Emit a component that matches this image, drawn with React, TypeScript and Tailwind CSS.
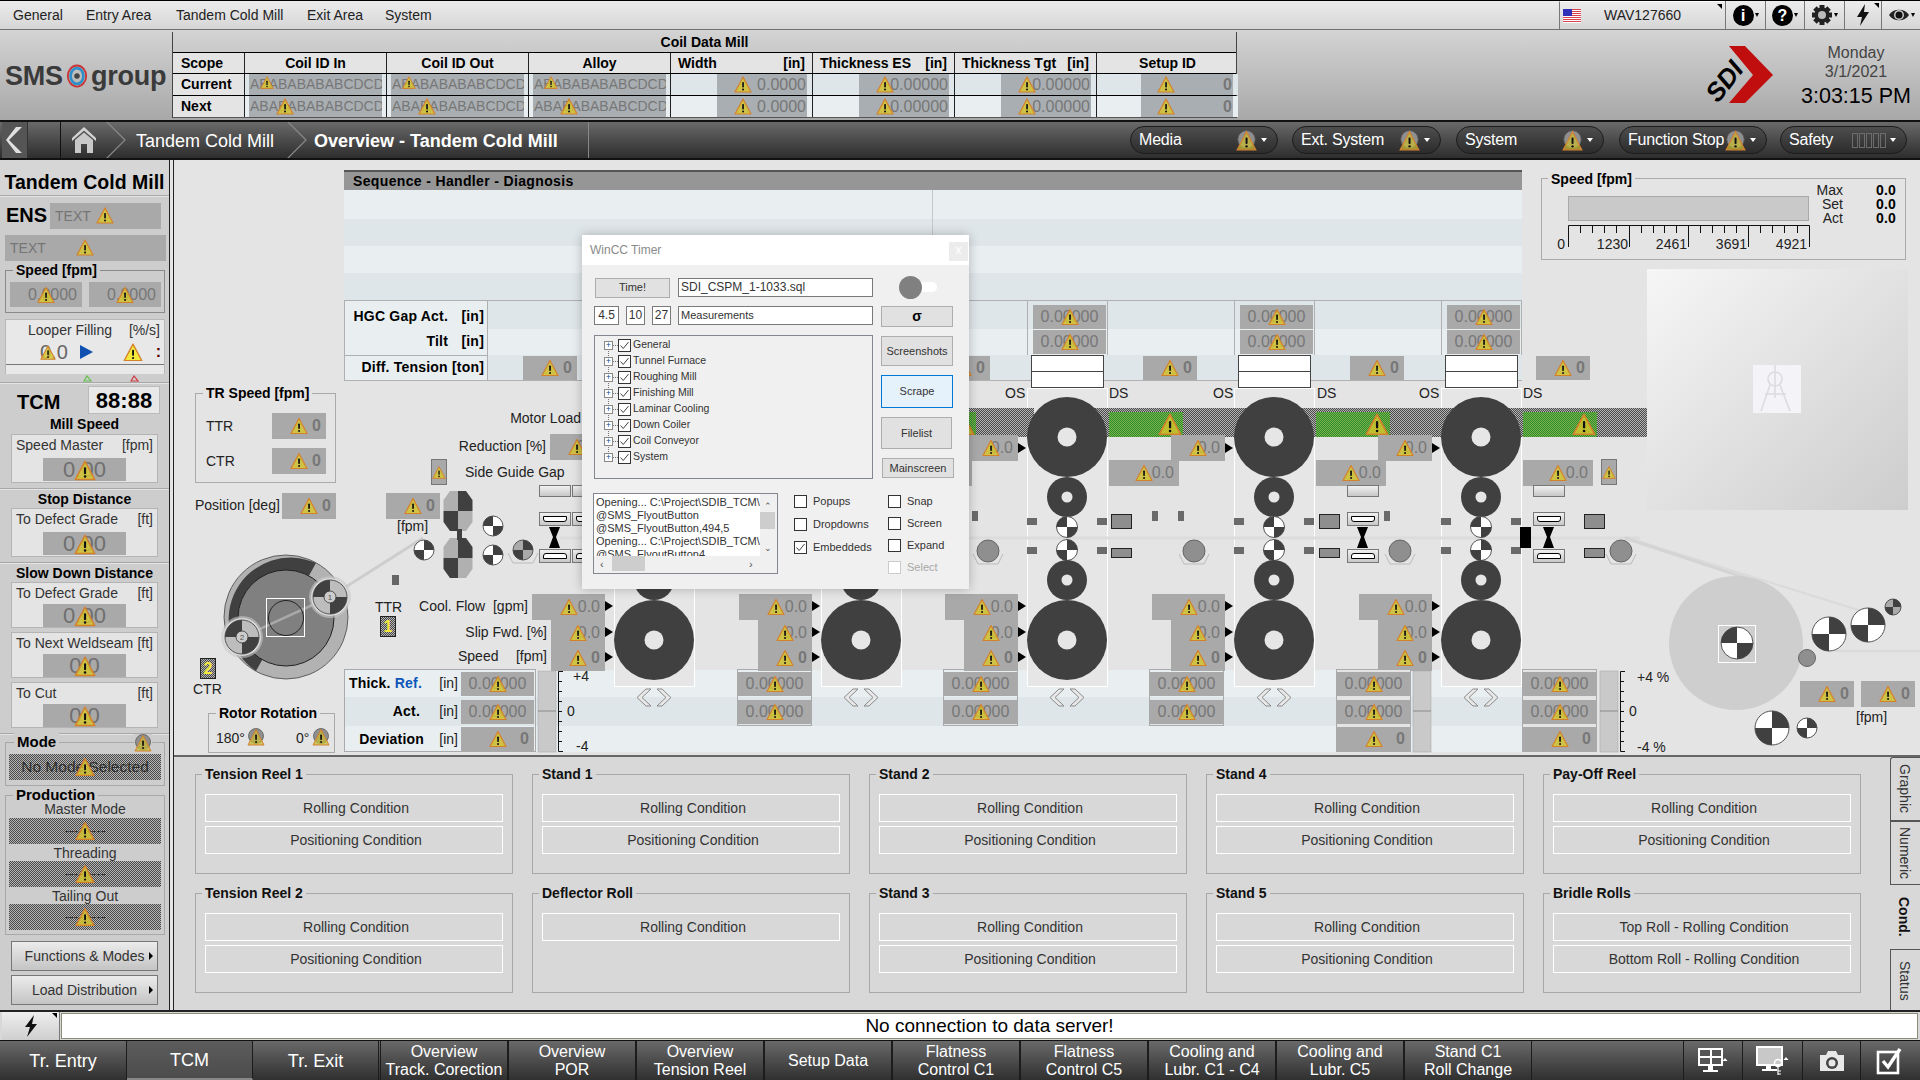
import React from "react";

const OX = 174;
const OY = 160;
const P = (x: number, y: number, w?: number, h?: number): React.CSSProperties => ({ left: x - OX, top: y - OY, width: w, height: h });
const CENTER = "absolute left-1/2 top-1/2 -translate-x-1/2 -translate-y-1/2";
const STANDS = [654, 861, 1067, 1274, 1481];
const CHECKER = "bg-[image:repeating-conic-gradient(#4a4a4a_0%_25%,#b4b4b4_0%_50%)] bg-[length:2px_2px]";

function Warn({ w = 18, className = "", bright = false }: { w?: number; className?: string; bright?: boolean }) {
  const h = (w * 17) / 18;
  return (
    <svg width={w} height={h} viewBox="0 0 36 34" className={className}>
      <path d="M18 2 L34 32 H2 Z" fill={bright ? "#f4e83c" : "#d6c62c"} fillOpacity={bright ? 1 : 0.82} stroke="#d4812c" strokeWidth="2.4" strokeLinejoin="round" />
      <rect x="16.4" y="12" width="3.4" height="11" rx="1.4" fill="#111" />
      <circle cx="18.1" cy="27" r="2" fill="#111" />
    </svg>
  );
}

function WarnRound({ className = "", s = 18 }: { className?: string; s?: number }) {
  return (
    <svg width={s} height={s} viewBox="0 0 36 36" className={className}>
      <circle cx="18" cy="16" r="15" fill="#8f8f8f" stroke="#555" strokeWidth="1.5" />
      <path d="M18 3 L34 34 H2 Z" fill="#c6b834" stroke="#d4812c" strokeWidth="2" fillOpacity="0.75" />
      <rect x="16.4" y="13" width="3.4" height="11" rx="1.4" fill="#111" />
      <circle cx="18.1" cy="28" r="2" fill="#111" />
    </svg>
  );
}

function Val({ x, y, w = 54, h = 26, t, bold = false, center = false }: { x: number; y: number; w?: number; h?: number; t: string; bold?: boolean; center?: boolean }) {
  return (
    <div
      className={`absolute flex items-center bg-[#a9a9a9] text-[#777] text-[16px] ${center ? "justify-center" : "justify-end pr-[5px]"} ${bold ? "font-bold" : ""}`}
      style={P(x, y, w, h)}
    >
      {t}
      <Warn className={CENTER} />
    </div>
  );
}

function Lab({ x, y, t, right = false, bold = false, className = "" }: { x: number; y: number; t: React.ReactNode; right?: boolean; bold?: boolean; className?: string }) {
  return (
    <div
      className={`absolute whitespace-nowrap leading-[18px] text-[14px] text-[#222] ${right ? "-translate-x-full" : ""} ${bold ? "font-bold text-black tracking-[0.2px]" : ""} ${className}`}
      style={{ left: x - OX, top: y - OY - 9 }}
    >
      {t}
    </div>
  );
}

function Chk({ cx, cy, r, a = "#404040", b = "#ffffff", flip = false, ring = "#555" }: { cx: number; cy: number; r: number; a?: string; b?: string; flip?: boolean; ring?: string }) {
  const w1 = flip
    ? `M${cx} ${cy} L${cx + r} ${cy} A${r} ${r} 0 0 1 ${cx} ${cy + r} Z M${cx} ${cy} L${cx - r} ${cy} A${r} ${r} 0 0 1 ${cx} ${cy - r} Z`
    : `M${cx} ${cy} L${cx} ${cy - r} A${r} ${r} 0 0 1 ${cx + r} ${cy} Z M${cx} ${cy} L${cx} ${cy + r} A${r} ${r} 0 0 1 ${cx - r} ${cy} Z`;
  return (
    <g>
      <circle cx={cx} cy={cy} r={r} fill={b} stroke={ring} strokeWidth="1" />
      <path d={w1} fill={a} />
    </g>
  );
}

function Oval({ cx, cy, id, notchTop }: { cx: number; cy: number; id: string; notchTop: boolean }) {
  return (
    <g>
      <clipPath id={id}>
        <path d={`M${cx - 8} ${cy - 20} H${cx + 8} L${cx + 14.5} ${cy - 11} V${cy + 11} L${cx + 8} ${cy + 20} H${cx - 8} L${cx - 14.5} ${cy + 11} V${cy - 11} Z`} />
      </clipPath>
      <g clipPath={`url(#${id})`}>
        <rect x={cx - 15} y={cy - 20} width="15" height="20" fill="#b0b0b0" />
        <rect x={cx} y={cy - 20} width="15" height="20" fill="#404040" />
        <rect x={cx - 15} y={cy} width="15" height="20" fill="#404040" />
        <rect x={cx} y={cy} width="15" height="20" fill="#b0b0b0" />
      </g>
      <rect x={cx - 1} y={notchTop ? cy - 25 : cy + 18} width="5" height="7" fill="#404040" />
    </g>
  );
}

function Guide({ x, y, kind }: { x: number; y: number; kind: number }) {
  return (
    <div
      className="absolute flex items-center justify-center border border-[#777] bg-linear-to-b from-[#f0f0f0] to-[#c8c8c8]"
      style={P(x, y, 32, kind === 0 ? 12 : 14)}
    >
      {kind !== 0 && <div className={`w-[24px] h-[6px] border border-black bg-white ${kind === 1 ? "rounded-b-[3px]" : "rounded-t-[3px]"}`} />}
    </div>
  );
}

/* ------------------------- top ------------------------- */

function Flag() {
  return (
    <svg width="18" height="14" viewBox="0 0 18 14">
      <rect width="18" height="14" fill="#fff" />
      {[0, 2, 4, 6, 8, 10, 12].map((y) => (
        <rect key={y} y={y} width="18" height="1" fill="#d9434f" />
      ))}
      <rect width="9" height="7" fill="#2f2fb8" />
    </svg>
  );
}

function Caret({ className = "" }: { className?: string }) {
  return <span className={`inline-block w-0 h-0 border-x-[2.5px] border-x-transparent border-t-[4px] border-t-black ${className}`} />;
}

function TopBar() {
  const items: [string, string][] = [
    ["General", "w-[73px]"],
    ["Entry Area", "w-[90px]"],
    ["Tandem Cold Mill", "w-[131px]"],
    ["Exit Area", "w-[78px]"],
    ["System", "w-[60px]"],
  ];
  return (
    <div className="h-[30px] flex border-t border-black border-b border-b-[#707070] bg-linear-to-b from-[#ececec] to-[#d6d6d6] text-[14px] text-[#222]">
      <div className="flex items-center pl-[13px]">
        {items.map(([t, w]) => (
          <div key={t} className={w}>
            {t}
          </div>
        ))}
      </div>
      <div className="ml-auto flex h-full">
        <div className="relative w-[166px] flex items-center border-l border-[#777] pl-[3px] border-t border-t-white">
          <Flag />
          <span className="ml-[23px] text-[#222]">WAV127660</span>
          <span className="absolute right-[3px] top-[2px] w-0 h-0 border-l-[5px] border-l-transparent border-t-[5px] border-t-black" />
        </div>
        <div className="w-[40px] flex items-center justify-center gap-[1px] border-l border-[#777]">
          <div className="w-[21px] h-[21px] rounded-full bg-black text-white font-bold text-[17px] leading-[21px] text-center">i</div>
          <Caret />
        </div>
        <div className="w-[39px] flex items-center justify-center gap-[1px] border-l border-[#777]">
          <div className="w-[21px] h-[21px] rounded-full bg-black text-white font-bold text-[16px] leading-[21px] text-center">?</div>
          <Caret />
        </div>
        <div className="w-[40px] flex items-center justify-center gap-[1px] border-l border-[#777]">
          <svg width="22" height="22" viewBox="0 0 22 22">
            <g fill="#222">
              {[0, 45, 90, 135].map((a) => (
                <rect key={a} x="8.5" y="1" width="5" height="20" transform={`rotate(${a} 11 11)`} />
              ))}
              <circle cx="11" cy="11" r="7.5" />
            </g>
            <circle cx="11" cy="11" r="4" fill="#bbb" />
          </svg>
          <Caret />
        </div>
        <div className="relative w-[37px] flex items-center justify-center border-l border-[#777]">
          <svg width="16" height="24" viewBox="0 0 16 24">
            <path d="M10 1 L2 14 H7 L5 23 L14 9 H9 Z" fill="#111" />
          </svg>
          <span className="absolute right-[2px] top-[2px] w-0 h-0 border-l-[5px] border-l-transparent border-t-[5px] border-t-black" />
        </div>
        <div className="w-[39px] flex items-center justify-center gap-[1px] border-l border-[#777]">
          <svg width="22" height="18" viewBox="0 0 22 18">
            <path d="M1 9 C5 2 17 2 21 9 C17 16 5 16 1 9 Z" fill="#222" />
            <circle cx="11" cy="9" r="5" fill="#ccc" />
            <circle cx="11" cy="9" r="3.5" fill="#111" />
          </svg>
          <Caret />
        </div>
      </div>
    </div>
  );
}

function WarnCell({ tone, boxX, boxW, t, warnLeft, warnW = 18, text14 = false, bold = false }: { tone: string; boxX: number; boxW: number; t: string; warnLeft: number; warnW?: number; text14?: boolean; bold?: boolean }) {
  return (
    <div className={`relative border-l border-[#222] overflow-hidden ${tone}`}>
      <div
        className={`absolute top-0 bottom-0 bg-[#a9aeb2] text-[#777] flex items-center whitespace-nowrap overflow-hidden ${text14 ? "text-[14px] pl-[1px]" : "text-[16px] justify-end pr-[1px]"} ${bold ? "font-bold" : ""}`}
        style={{ left: boxX, width: boxW }}
      >
        {t}
      </div>
      <div className="absolute top-[2px]" style={{ left: warnLeft }}>
        <Warn w={warnW} />
      </div>
    </div>
  );
}

function CoilTable() {
  const heads: [string, string?][] = [
    ["Coil ID In"],
    ["Coil ID Out"],
    ["Alloy"],
    ["Width", "[in]"],
    ["Thickness ES", "[in]"],
    ["Thickness Tgt", "[in]"],
    ["Setup ID"],
  ];
  const AB = "ABABABABABCDCD";
  const rows: [string, string, number][] = [
    ["Current", "bg-[#dfe6e9]", 15],
    ["Next", "bg-[#e9eef1]", 31],
  ];
  return (
    <div className="w-[1065px] h-[86px] mt-[2px] border-l border-r border-[#444] flex flex-col">
      <div className="h-[20px] leading-[21px] text-center font-bold text-[14px]">Coil Data Mill</div>
      <div className="grid grid-cols-[71px_repeat(7,142px)] h-[22px] border-t border-black border-b bg-[#e4e4e4] font-bold text-[14px]">
        <div className="pl-[8px] leading-[20px]">Scope</div>
        {heads.map(([a, b]) => (
          <div key={a} className={`border-l border-[#222] leading-[20px] flex px-[7px] ${b ? "justify-between" : "justify-center"}`}>
            <span>{a}</span>
            {b && <span>{b}</span>}
          </div>
        ))}
      </div>
      {rows.map(([label, tone, off], i) => (
        <div key={label} className={`grid grid-cols-[71px_repeat(7,142px)] h-[22px] border-black ${i === 0 ? "border-b" : "border-b border-b-[#555]"}`}>
          <div className="pl-[8px] leading-[21px] bg-[#e4e4e4] font-bold text-[14px]">{label}</div>
          <WarnCell tone={tone} boxX={4} boxW={133} t={AB} warnLeft={off} warnW={off === 15 ? 14 : 18} text14 />
          <WarnCell tone={tone} boxX={4} boxW={133} t={AB} warnLeft={off} warnW={off === 15 ? 14 : 18} text14 />
          <WarnCell tone={tone} boxX={4} boxW={133} t={AB} warnLeft={off} warnW={off === 15 ? 14 : 18} text14 />
          <WarnCell tone={tone} boxX={46} boxW={90} t="0.0000" warnLeft={63} />
          <WarnCell tone={tone} boxX={46} boxW={90} t="0.00000" warnLeft={63} />
          <WarnCell tone={tone} boxX={46} boxW={90} t="0.00000" warnLeft={63} />
          <WarnCell tone={tone} boxX={44} boxW={92} t="0" warnLeft={60} bold />
        </div>
      ))}
    </div>
  );
}

function Header() {
  return (
    <div className="h-[90px] flex bg-linear-to-b from-[#d4d4d4] to-[#a8a8a8]">
      <div className="w-[172px] flex items-center pl-[5px] pt-[2px] text-[#3a3a3a] font-bold text-[27px] tracking-[-0.2px]">
        <span>SMS</span>
        <svg width="22" height="26" viewBox="0 0 24 26" className="mx-[3px] shrink-0">
          <ellipse cx="12" cy="13" rx="10" ry="11.5" fill="none" stroke="#cc3333" strokeWidth="2" />
          <ellipse cx="12" cy="13" rx="7" ry="8.5" fill="none" stroke="#2f8fc8" strokeWidth="3" />
          <circle cx="12" cy="13" r="3" fill="#444" />
        </svg>
        <span>group</span>
      </div>
      <CoilTable />
      <div className="ml-auto flex items-start">
        <div className="relative w-[80px] h-[60px] mt-[16px] mr-[18px]">
          <span className="absolute left-[6px] top-[16px] text-[26px] font-bold italic text-black -rotate-[52deg]">SDI</span>
          <svg width="48" height="60" viewBox="0 0 48 60" className="absolute left-[30px] top-0">
            <path d="M2 0 H18 L46 29 L18 57 H2 L26 29 Z" fill="#c00d0d" />
          </svg>
        </div>
        <div className="w-[122px] mr-[3px] pt-[13px] text-center text-[#444]">
          <div className="text-[16px] leading-[19px]">Monday</div>
          <div className="text-[16px] leading-[20px]">3/1/2021</div>
          <div className="text-[21.5px] leading-[29px] text-black whitespace-nowrap">3:03:15 PM</div>
        </div>
      </div>
    </div>
  );
}

function Pill({ t, w, ml, safety = false }: { t: string; w: string; ml: string; safety?: boolean }) {
  return (
    <div className={`${w} ${ml} h-[28px] rounded-full border border-[#1c1c1c] bg-linear-to-b from-[#4e4e4e] to-[#2c2c2c] flex items-center pl-[8px] pr-[10px] text-white text-[16px] tracking-[-0.2px] whitespace-nowrap`}>
      <span>{t}</span>
      {safety ? (
        <span className="ml-auto flex gap-[1px]">
          {[0, 1, 2, 3, 4].map((i) => (
            <span key={i} className="w-[6px] h-[15px] border border-[#6c6c6c]" />
          ))}
        </span>
      ) : (
        <span className="ml-auto">
          <WarnRound s={21} />
        </span>
      )}
      <span className="ml-[4px] w-0 h-0 border-x-[3px] border-x-transparent border-t-[4px] border-t-white" />
    </div>
  );
}

function NavBar() {
  return (
    <div className="h-[40px] flex items-center border-t-2 border-b-2 border-[#111] bg-linear-to-b from-[#6a6a6a] to-[#2e2e2e] text-white relative">
      <div className="w-[26px] ml-[2px] h-full flex items-center justify-center border-r border-[#333] bg-[#555]">
        <svg width="18" height="28" viewBox="0 0 18 28">
          <path d="M16 1 L3 14 L16 27 H10 L0 14 L10 1 Z" fill="#e0e0e0" />
        </svg>
      </div>
      <div className="w-[33px] h-full border-r border-[#111]" />
      <div className="w-[44px] flex justify-center pl-[1px]">
        <svg width="26" height="28" viewBox="0 0 26 28">
          <path d="M13 1 L25 12 V15 L13 4.5 L1 15 V12 Z" fill="#d4d4d4" />
          <path d="M4 14 L13 6.5 L22 14 V27 H16 V18 H10 V27 H4 Z" fill="#c9c9c9" />
        </svg>
      </div>
      <svg width="24" height="36" viewBox="0 0 24 36" className="shrink-0">
        <path d="M1 -1 L20 18 L1 37" fill="none" stroke="#8a8a8a" strokeWidth="1.2" />
      </svg>
      <span className="ml-[7px] pt-[2px] text-[18px] whitespace-nowrap w-[150px]">Tandem Cold Mill</span>
      <svg width="24" height="36" viewBox="0 0 24 36" className="shrink-0">
        <path d="M1 -1 L20 18 L1 37" fill="none" stroke="#8a8a8a" strokeWidth="1.2" />
      </svg>
      <span className="ml-[4px] pt-[2px] font-bold text-[18px] whitespace-nowrap w-[274px]">Overview - Tandem Cold Mill</span>
      <div className="h-full border-l border-[#888]" />
      <Pill t="Media" w="w-[148px]" ml="ml-[541px]" />
      <Pill t="Ext. System" w="w-[149px]" ml="ml-[14px]" />
      <Pill t="System" w="w-[148px]" ml="ml-[15px]" />
      <Pill t="Function Stop" w="w-[148px]" ml="ml-[15px]" />
      <Pill t="Safety" w="w-[127px]" ml="ml-[13px]" safety />
    </div>
  );
}

/* ------------------------- sidebar ------------------------- */

function BigVal({ t }: { t: string }) {
  return (
    <div className="relative w-[83px] h-[23px] mx-auto bg-[#a9a9a9] flex items-center justify-center text-[22px] text-[#6f6f6f]">
      {t}
      <Warn w={22} className="absolute left-1/2 bottom-0 -translate-x-1/2" />
    </div>
  );
}

function DistBox({ label, unit, value, h, mt, lh }: { label: string; unit: string; value: string; h: string; mt: string; lh: string }) {
  return (
    <div className={`${h} ${mt} mx-[11px] border border-[#b4b4b4] bg-[#e4e4e4] flex flex-col`}>
      <div className={`${lh} shrink-0 flex justify-between px-[4px] text-[14px] text-[#333] leading-[20px]`}>
        <span>{label}</span>
        <span>{unit}</span>
      </div>
      <BigVal t={value} />
    </div>
  );
}

function Sep() {
  return <div className="h-[2px] bg-[#a8a8a8] border-b border-[#e4e4e4] shrink-0" />;
}

function CheckBar({ t, mt, wide = false }: { t: string; mt: string; wide?: boolean }) {
  return (
    <div className={`relative ${mt} mx-[5px] h-[26px] ${CHECKER} flex items-center justify-center whitespace-nowrap text-[#2e2e2e] ${wide ? "text-[15.5px]" : "text-[14px]"}`}>
      {t}
      <Warn w={20} className={CENTER} />
    </div>
  );
}

function Sidebar() {
  return (
    <div className="w-[174px] h-[850px] shrink-0 flex border-r border-[#222]">
      <div className="w-[170px] shrink-0 border-r border-[#222] bg-[#cdcdcd] flex flex-col text-[#222] overflow-hidden">
        <div className="h-[35px] shrink-0 flex items-center justify-center pt-[10px] font-bold text-[19.5px] text-black whitespace-nowrap bg-[#d6d6d6]">Tandem Cold Mill</div>
        <Sep />
        <div className="h-[185px] shrink-0">
          <div className="mt-[6px] h-[26px] flex">
            <span className="pl-[6px] w-[50px] font-bold text-[20px] text-black leading-[24px]">ENS</span>
            <div className="w-[111px] bg-[#a9a9a9] flex items-center pl-[5px] text-[#757575] text-[14px] relative">
              TEXT
              <Warn className="absolute left-[46px] top-[4px]" />
            </div>
          </div>
          <div className="mt-[6px] mx-[5px] h-[26px] w-[161px] bg-[#a9a9a9] flex items-center pl-[5px] text-[#757575] text-[14px] relative">
            TEXT
            <Warn className="absolute left-[71px] top-[4px]" />
          </div>
          <div className="relative mt-[9px] mx-[5px] w-[160px] h-[43px] border border-[#8a8a8a]">
            <div className="absolute -top-[10px] left-[7px] px-[3px] h-[18px] leading-[18px] bg-[#cdcdcd] font-bold text-[14px] text-black">Speed [fpm]</div>
            <div className="flex gap-[7px] pl-[4px] pt-[11px]">
              {[0, 1].map((i) => (
                <div key={i} className="relative w-[72px] h-[25px] bg-[#a9a9a9] text-[#777] text-[16px] flex items-center justify-end pr-[5px]">
                  0.0000
                  <Warn className={CENTER} />
                </div>
              ))}
            </div>
          </div>
          <div className="relative mt-[6px] mx-[5px] w-[160px] h-[55px] bg-[#e8e8e8] border-t border-x border-[#b8b8b8]">
            <div className="flex justify-between pl-[22px] pr-[4px] text-[14px] text-[#333] leading-[20px]">
              <span>Looper Filling</span>
              <span>[%/s]</span>
            </div>
            <div className="h-[24px] flex items-center">
              <span className="relative ml-[34px] text-[20px] text-[#666] leading-[24px]">
                0.0
                <Warn w={16} className="absolute left-0 top-[5px]" />
              </span>
              <svg width="13" height="14" viewBox="0 0 13 14" className="ml-[12px]">
                <path d="M0 0 L13 7 L0 14 Z" fill="#0f4fb0" />
              </svg>
              <Warn w={20} bright className="ml-[30px]" />
              <span className="ml-[13px] font-bold text-[#500] text-[16px]">:</span>
            </div>
            <div className="border-t border-[#777] h-[9px]" />
            <svg width="160" height="8" viewBox="0 0 160 8" className="absolute left-0 top-[55px]">
              <path d="M78 6 L81 1 L85 6 Z" fill="none" stroke="#5fc24a" strokeWidth="1.2" />
              <path d="M125 6 L128 1 L132 6 Z" fill="none" stroke="#d0383f" strokeWidth="1.2" />
            </svg>
          </div>
        </div>
        <Sep />
        <div className="h-[104px] shrink-0">
          <div className="mt-[2px] h-[28px] flex items-center">
            <span className="pl-[17px] pt-[3px] w-[88px] font-bold text-[20px] text-black">TCM</span>
            <div className="w-[72px] h-[28px] border border-[#bbb] bg-[#e8e8e8] text-center text-black font-bold text-[22px] leading-[28px]">88:88</div>
          </div>
          <div className="h-[20px] text-center font-bold text-[14px] text-black leading-[20px]">Mill Speed</div>
          <DistBox label="Speed Master" unit="[fpm]" value="0.00" h="h-[49px]" mt="mt-0" lh="h-[23px]" />
        </div>
        <Sep />
        <div className="h-[72px] shrink-0">
          <div className="h-[18px] text-center font-bold text-[14px] text-black leading-[19px]">Stop Distance</div>
          <DistBox label="To Defect Grade" unit="[ft]" value="0.00" h="h-[49px]" mt="mt-0" lh="h-[23px]" />
        </div>
        <Sep />
        <div className="h-[169px] shrink-0">
          <div className="h-[18px] text-center font-bold text-[14px] text-black leading-[19px]">Slow Down Distance</div>
          <DistBox label="To Defect Grade" unit="[ft]" value="0.00" h="h-[46px]" mt="mt-0" lh="h-[21px]" />
          <DistBox label="To Next Weldseam" unit="[ft]" value="0.0" h="h-[46px]" mt="mt-[4px]" lh="h-[21px]" />
          <DistBox label="To Cut" unit="[ft]" value="0.0" h="h-[46px]" mt="mt-[4px]" lh="h-[21px]" />
        </div>
        <Sep />
        <div className="flex-1">
          <div className="relative mt-[7px] mx-[5px] w-[160px] h-[44px] border border-[#a8a8a8]">
            <div className="absolute -top-[10px] left-[8px] px-[3px] h-[18px] leading-[18px] bg-[#cdcdcd] font-bold text-[15px] text-black">Mode</div>
            <WarnRound className="absolute right-[12px] -top-[9px] bg-[#cdcdcd]" />
            <div className="-mx-[1px] [&>div]:mx-[4px]">
              <CheckBar t="No Mode Selected" mt="mt-[11px]" wide />
            </div>
          </div>
          <div className="relative mt-[9px] mx-[5px] w-[160px] h-[140px] border border-[#a8a8a8]">
            <div className="absolute -top-[10px] left-[7px] px-[3px] h-[18px] leading-[18px] bg-[#cdcdcd] font-bold text-[15px] text-black">Production</div>
            <div className="-mx-[1px] [&>div]:mx-[4px] text-center text-[14px] text-[#333]">
              <div className="h-[22px] pt-[5px] leading-[17px]">Master Mode</div>
              <CheckBar t="---- ----" mt="" />
              <div className="h-[17px] leading-[19px]">Threading</div>
              <CheckBar t="---- ----" mt="" />
              <div className="h-[17px] leading-[19px]">Tailing Out</div>
              <CheckBar t="---- ----" mt="" />
            </div>
          </div>
          <div className="relative mt-[6px] mx-[11px] h-[30px] border border-[#777] bg-linear-to-b from-[#ececec] to-[#c4c4c4] text-[14px] text-[#333] flex items-center justify-center">
            Functions &amp; Modes
            <span className="absolute right-[4px] top-[10px] w-0 h-0 border-y-[4px] border-y-transparent border-l-[4px] border-l-black" />
          </div>
          <div className="relative mt-[4px] mx-[11px] h-[30px] border border-[#777] bg-linear-to-b from-[#ececec] to-[#c4c4c4] text-[14px] text-[#333] flex items-center justify-center">
            Load Distribution
            <span className="absolute right-[4px] top-[10px] w-0 h-0 border-y-[4px] border-y-transparent border-l-[4px] border-l-black" />
          </div>
        </div>
      </div>
      <div className="w-[3px] bg-[#e4e4e4]" />
    </div>
  );
}

/* ------------------------- diagram ------------------------- */

function Diagram() {
  const dashY = [518, 547];
  return (
    <svg className="absolute left-0 top-0" width="1746" height="595" viewBox="174 160 1746 595">
      {/* strip */}
      <line x1="560" y1="538" x2="1640" y2="538" stroke="#dcdcdc" strokeWidth="3" />
      <path d="M1625 537 L1868 613" stroke="#dadada" strokeWidth="2" fill="none" />
      <path d="M1625 538 L1752 580" stroke="#d4d4d4" strokeWidth="3" fill="none" />
      <line x1="1835" y1="651" x2="1920" y2="651" stroke="#dadada" strokeWidth="2.5" />
      <path d="M242 637 L330 597 L423 538" stroke="#cdcdcd" strokeWidth="3" fill="none" />

      {/* coiler */}
      <circle cx="286" cy="617" r="62" fill="#b2b2b2" stroke="#444" strokeWidth="0.8" />
      <path d="M286 617 L316 563 A62 62 0 0 0 256 671 Z" fill="#404040" />
      <circle cx="286" cy="618" r="48" fill="#808080" stroke="#222" strokeWidth="1" />
      <path d="M242 637 L330 597" stroke="#a8a8a8" strokeWidth="2.5" fill="none" />
      <rect x="266.5" y="598.5" width="38" height="38" fill="none" stroke="#fff" strokeWidth="1" />
      <circle cx="286" cy="618" r="17.5" fill="none" stroke="#222" strokeWidth="1" />
      {[[330, 597, "1"], [242, 637, "2"]].map(([x, y, t]) => (
        <g key={String(t)}>
          <circle cx={Number(x)} cy={Number(y)} r="21" fill="#c8c8c8" fillOpacity="0.6" />
          <circle cx={Number(x)} cy={Number(y)} r="19" fill="#d8d8d8" />
          <Chk cx={Number(x)} cy={Number(y)} r={17} b="#bdbdbd" flip />
          <circle cx={Number(x)} cy={Number(y)} r="6" fill="#ccc" stroke="#333" strokeWidth="0.8" />
          <text x={Number(x)} y={Number(y) + 3} fontSize="8" textAnchor="middle" fill="#555">{t}</text>
        </g>
      ))}

      {/* entry group */}
      <Oval cx={458} cy={511} id="ov1" notchTop={false} />
      <Oval cx={458} cy={558} id="ov2" notchTop />
      <Chk cx={493} cy={526} r={10} flip />
      <Chk cx={493} cy={555} r={10} />
      <Chk cx={424} cy={550} r={10} />
      <Chk cx={523} cy={550} r={10} b="#aaaaaa" />
      <path d="M508 553 L513 563 H533 L538 553" fill="none" stroke="#bbb" />
      <rect x="392" y="575" width="7" height="10" fill="#666" />

      {/* stands */}
      {STANDS.map((c) => (
        <g key={c}>
          <circle cx={c} cy="437" r="40" fill="#404040" />
          <circle cx={c} cy="437" r="9.5" fill="#e6e6e6" />
          <circle cx={c} cy="497" r="20" fill="#404040" />
          <circle cx={c} cy="497" r="5.5" fill="#e6e6e6" />
          <Chk cx={c} cy={527} r={10.5} flip />
          <Chk cx={c} cy={550} r={10.5} />
          <circle cx={c} cy="580" r="20" fill="#404040" />
          <circle cx={c} cy="580" r="5.5" fill="#e6e6e6" />
          <circle cx={c} cy="640" r="40" fill="#404040" />
          <circle cx={c} cy="640" r="9.5" fill="#e6e6e6" />
          {dashY.map((y) => (
            <g key={y} fill="#6a6a6a">
              <rect x={c - 40} y={y} width="10" height="7" />
              <rect x={c + 30} y={y} width="10" height="7" />
            </g>
          ))}
          <path d={`M${c - 3} 689 H${c - 8} L${c - 17} 697.5 L${c - 8} 706 H${c - 3} L${c - 12} 697.5 Z`} fill="#e8e8e8" stroke="#8a8a8a" />
          <path d={`M${c + 3} 689 H${c + 8} L${c + 17} 697.5 L${c + 8} 706 H${c + 3} L${c + 12} 697.5 Z`} fill="#e8e8e8" stroke="#8a8a8a" />
          {[448, 606, 632, 657].map((y) => (
            <path key={y} d={`M${c - 49} ${y - 5} L${c - 41} ${y} L${c - 49} ${y + 5} Z`} fill="#000" />
          ))}
        </g>
      ))}

      {/* circles with cradle */}
      {[988, 1194, 1400, 1621].map((x) => (
        <g key={x}>
          <circle cx={x} cy="551" r="11" fill="#8f8f8f" stroke="#666" />
          <path d={`M${x - 15} 554 L${x - 10} 564 H${x + 10} L${x + 15} 554`} fill="none" stroke="#bbb" />
        </g>
      ))}

      {/* hourglasses */}
      {[539, 1347, 1533].map((x) => (
        <path key={x} d={`M${x + 10} 527 H${x + 21} L${x + 17} 537 L${x + 21} 548 H${x + 10} L${x + 14} 537 Z`} fill="#000" />
      ))}

      {/* grey blocks */}
      {[1111, 1319, 1584].map((x) => (
        <g key={x} fill="#8e8e8e" stroke="#222">
          <rect x={x + 0.5} y="514.5" width="20" height="14" />
          <rect x={x + 0.5} y="548.5" width="20" height="9" />
        </g>
      ))}
      {[972, 1152, 1178, 1384].map((x) => (
        <rect key={x} x={x} y="511" width="6" height="10" fill="#6a6a6a" />
      ))}
      <rect x="1520" y="527" width="11" height="21" fill="#000" />

      {/* gauges */}
      {[[538, true], [1413, false], [1600, true]].map(([x, sc]) => (
        <g key={String(x)}>
          <rect x={Number(x)} y="671" width="18" height="81" fill="#c9c9c9" stroke="#aaa" strokeWidth="0.6" />
          <line x1={Number(x)} y1="711" x2={Number(x) + 18} y2="711" stroke="#8a8a8a" />
          {sc && <path d={`M${Number(x) + 25} 671.5 H${Number(x) + 20.5} V751.5 H${Number(x) + 25}`} fill="none" stroke="#111" />}
          {sc &&
            [681, 691, 701, 711, 721, 731, 741].map((y) => (
              <line key={y} x1={Number(x) + 20} x2={Number(x) + 24} y1={y + 0.5} y2={y + 0.5} stroke="#111" />
            ))}
        </g>
      ))}

      {/* pay-off reel */}
      <circle cx="1736" cy="643" r="67" fill="#cecece" />
      <rect x="1718.5" y="625.5" width="37" height="37" fill="none" stroke="#fff" />
      <Chk cx={1737} cy={643} r={16} flip />
      <Chk cx={1829} cy={634} r={17} />
      <Chk cx={1868} cy={625} r={17} />
      <Chk cx={1893} cy={607} r={8} b="#aaaaaa" />
      <circle cx="1807" cy="658" r="8.5" fill="#8f8f8f" stroke="#666" />
      <Chk cx={1772} cy={728} r={17} />
      <Chk cx={1807} cy={728} r={10} />

      {/* speed scale */}
      <path d="M1568.5 247 V225.5 H1809.5 V247" fill="none" stroke="#111" />
      {[1629, 1688, 1748].map((x) => (
        <line key={x} x1={x + 0.5} x2={x + 0.5} y1="225" y2="247" stroke="#111" />
      ))}
      {[1580, 1592, 1604, 1616, 1641, 1653, 1664, 1676, 1700, 1712, 1724, 1736, 1760, 1772, 1784, 1797].map((x) => (
        <line key={x} x1={x + 0.5} x2={x + 0.5} y1="225" y2="233" stroke="#111" />
      ))}

      {/* compass */}
      <g stroke="#dcdce0" strokeWidth="1.6" fill="none">
        <line x1="1775" y1="365" x2="1775" y2="398" />
        <circle cx="1775" cy="379" r="7" />
        <path d="M1770 385 L1761 411 M1780 385 L1790 411" />
        <line x1="1765" y1="394" x2="1786" y2="394" />
      </g>
    </svg>
  );
}

function Stripe({ y, h, dark, x = 344, w = 1178 }: { y: number; h: number; dark: boolean; x?: number; w?: number }) {
  return <div className={`absolute ${dark ? "bg-[#dfe6e9]" : "bg-[#e9eef1]"}`} style={P(x, y, w, h)} />;
}

function Canvas() {
  const top: [number, number, boolean][] = [
    [190, 29, false],
    [219, 27, true],
    [246, 27, false],
    [273, 27, true],
    [300, 29, true],
    [329, 26, false],
    [355, 25, true],
    [670, 27, false],
    [697, 29, true],
    [726, 26, false],
  ];
  const thick: [number, boolean][] = [
    [737, false],
    [943, false],
    [1149, false],
    [1336, true],
    [1522, true],
  ];
  const band: [number, number][] = [
    [968, 66],
    [1042, 208],
    [1249, 208],
    [1456, 191],
  ];
  return (
    <div className="relative h-[595px] shrink-0 overflow-hidden bg-[#e4e4e4]">
      {top.map(([y, h, d]) => (
        <Stripe key={y} y={y} h={h} dark={d} />
      ))}
      <div className="absolute bg-[#969696] border-t-2 border-[#555] font-bold text-[14px] text-black pl-[9px] leading-[18px] tracking-[0.35px]" style={P(344, 170, 1178, 20)}>
        Sequence - Handler - Diagnosis
      </div>
      <div className="absolute bg-[#c4c8ca] w-px" style={P(932, 190, 1, 110)} />
      <div className="absolute border-t border-b border-[#b0b0b0]" style={P(344, 300, 1178, 81)} />
      <div className="absolute border border-[#b0b0b0] bg-[#e9eef1]" style={P(344, 300, 144, 81)} />
      <div className="absolute border-t border-[#b0b0b0]" style={P(344, 355, 144, 1)} />
      <Lab x={448} y={316} t="HGC Gap Act." right bold />
      <Lab x={484} y={316} t="[in]" right bold />
      <Lab x={448} y={341} t="Tilt" right bold />
      <Lab x={484} y={341} t="[in]" right bold />
      <Lab x={484} y={367} t="Diff. Tension [ton]" right bold />

      {/* speed group */}
      <div className="absolute border border-[#aaa]" style={P(1541, 178, 365, 82)}>
        <div className="absolute -top-[9px] left-[6px] px-[3px] h-[18px] leading-[18px] bg-[#e4e4e4] font-bold text-[14px] text-black">Speed [fpm]</div>
      </div>
      <div className="absolute bg-[#c9c9c9] border border-[#aaa]" style={P(1568, 196, 241, 25)} />
      <Lab x={1565} y={244} t="0" right />
      {[
        [1628, "1230"],
        [1687, "2461"],
        [1747, "3691"],
        [1807, "4921"],
      ].map(([x, t]) => (
        <Lab key={String(t)} x={Number(x)} y={244} t={t} right />
      ))}
      <Lab x={1843} y={190} t="Max" right className="text-[13px] leading-[15px]" />
      <Lab x={1843} y={204} t="Set" right className="text-[13px] leading-[15px]" />
      <Lab x={1843} y={218} t="Act" right className="text-[13px] leading-[15px]" />
      <Lab x={1896} y={190} t="0.0" right bold />
      <Lab x={1896} y={204} t="0.0" right bold className="text-[#0b56b8]" />
      <Lab x={1896} y={218} t="0.0" right bold />

      {/* reel picture */}
      <div className="absolute bg-linear-to-br from-[#f6f6f6] to-[#cdcdcd]" style={P(1647, 269, 261, 241)} />
      <div className="absolute bg-[#f3f3f8]" style={P(1753, 365, 48, 48)} />

      {/* tension group */}
      <div className="absolute border border-[#aaa]" style={P(195, 393, 141, 90)}>
        <div className="absolute -top-[10px] left-[7px] px-[3px] h-[18px] leading-[18px] bg-[#e4e4e4] font-bold text-[14px] text-black whitespace-nowrap">TR Speed [fpm]</div>
      </div>
      <Lab x={206} y={426} t="TTR" />
      <Lab x={206} y={461} t="CTR" />
      <Val x={272} y={413} t="0" bold />
      <Val x={272} y={448} t="0" bold />
      <Lab x={195} y={505} t="Position [deg]" />
      <Val x={282} y={493} t="0" bold />
      <Val x={386} y={493} t="0" bold />
      <Lab x={397} y={526} t="[fpm]" />

      {/* stand frames */}
      {STANDS.map((c) => (
        <div key={c} className="absolute bg-[#e6e6e6] border border-white" style={P(c - 40, 388, 81, 299)} />
      ))}
      {band.map(([x, w]) => (
        <div key={x} className={`absolute ${CHECKER}`} style={P(x, 408, w, 29)} />
      ))}

      <Diagram />

      {/* band green parts over the pattern */}
      {[902, 1109, 1316, 1523].map((x) => (
        <div key={x} className="absolute bg-[image:repeating-conic-gradient(#2e8b2e_0%_25%,#7ab34a_0%_50%)] bg-[length:2px_2px]" style={P(x, 412, 74, 25)}>
          <Warn w={24} className="absolute right-[1px] top-[1px]" />
        </div>
      ))}

      {/* cells above the stands */}
      {STANDS.slice(2).map((c) => (
        <React.Fragment key={c}>
          <div className="absolute border-x border-[#b0b0b0]" style={P(c - 40, 300, 81, 55)} />
          <Val x={c - 34} y={305} w={73} h={24} t="0.00000" center />
          <Val x={c - 34} y={330} w={73} h={24} t="0.00000" center />
          <div className="absolute bg-white border border-[#444]" style={P(c - 36, 355, 73, 17)} />
          <div className="absolute bg-white border border-[#444] border-t-0" style={P(c - 36, 372, 73, 16)} />
          <Val x={c - 103} y={435} t="0.0" />
          <Val x={c + 42} y={460} w={70} t="0.0" />
        </React.Fragment>
      ))}
      <Val x={902} y={460} w={70} t="0.0" />
      {[523, 936, 1143, 1350, 1536].map((x) => (
        <Val key={x} x={x} y={356} h={24} t="0" bold />
      ))}

      {/* OS / DS */}
      {[1005, 1213, 1419].map((x) => (
        <Lab key={x} x={x} y={393} t="OS" />
      ))}
      {[1109, 1317, 1523].map((x) => (
        <Lab key={x} x={x} y={393} t="DS" />
      ))}

      {/* small warn posts */}
      {[431, 1601].map((x) => (
        <div key={x} className="absolute bg-[#a9a9a9] border border-[#777] flex items-center justify-center" style={P(x, 459, 16, 26)}>
          <Warn />
        </div>
      ))}

      {/* guides */}
      {[539, 572, 1347, 1533].map((x) => (
        <React.Fragment key={x}>
          <Guide x={x} y={485} kind={0} />
          <Guide x={x} y={512} kind={1} />
          <Guide x={x} y={549} kind={2} />
        </React.Fragment>
      ))}

      {/* left labels */}
      <Lab x={581} y={418} t="Motor Load" right />
      <Lab x={546} y={446} t="Reduction [%]" right />
      <Val x={550} y={434} t="0.0" />
      <Lab x={465} y={472} t="Side Guide Gap" />
      <Lab x={528} y={606} t="Cool. Flow  [gpm]" right className="whitespace-pre" />
      <Lab x={547} y={632} t="Slip Fwd. [%]" right />
      <Lab x={458} y={656} t="Speed" />
      <Lab x={547} y={656} t="[fpm]" right />
      <Lab x={375} y={607} t="TTR" />
      <Lab x={193} y={689} t="CTR" />
      {[
        [380, 616, "1"],
        [200, 658, "2"],
      ].map(([x, y, t]) => (
        <div key={String(t)} className={`absolute border border-[#222] ${CHECKER} flex items-center justify-center font-bold text-[#f4e83c] text-[16px]`} style={P(Number(x), Number(y), 16, 21)}>
          {t}
        </div>
      ))}

      {/* bottom value rows */}
      {STANDS.map((c) => (
        <React.Fragment key={c}>
          <Val x={c - 122} y={594} w={73} t="0.0" />
          <Val x={c - 103} y={620} t="0.0" />
          <Val x={c - 103} y={645} t="0" bold />
        </React.Fragment>
      ))}

      {/* thickness table */}
      <div className="absolute border border-[#aaa]" style={P(344, 669, 192, 83)} />
      <Lab x={349} y={683} bold t={<span>Thick. <span className="text-[#0b56b8]">Ref.</span></span>} />
      <Lab x={458} y={683} t="[in]" right />
      <Lab x={420} y={711} bold t="Act." right />
      <Lab x={458} y={711} t="[in]" right />
      <Lab x={424} y={739} bold t="Deviation" right />
      <Lab x={458} y={739} t="[in]" right />
      <Val x={461} y={672} w={73} h={24} t="0.00000" center />
      <Val x={461} y={700} w={73} h={24} t="0.00000" center />
      <Val x={461} y={727} w={73} h={24} t="0" bold />
      {thick.map(([x, three]) => (
        <React.Fragment key={x}>
          <div className={`absolute border border-[#aaa] ${three ? "bg-[#e4e4e4]" : ""}`} style={P(x, 669, 75, three ? 83 : 57)} />
          <Val x={x + 1} y={672} w={73} h={24} t="0.00000" center />
          <Val x={x + 1} y={700} w={73} h={24} t="0.00000" center />
          {three && <Val x={x + 1} y={727} w={73} h={24} t="0" bold />}
        </React.Fragment>
      ))}
      <Lab x={573} y={676} t="+4" />
      <Lab x={567} y={711} t="0" />
      <Lab x={576} y={746} t="-4" />
      <Lab x={1637} y={677} t="+4 %" />
      <Lab x={1629} y={711} t="0" />
      <Lab x={1637} y={747} t="-4 %" />

      {/* right values */}
      <Val x={1800} y={681} t="0" bold />
      <Val x={1861} y={681} t="0" bold />
      <Lab x={1856} y={717} t="[fpm]" />

      {/* rotor */}
      <div className="absolute border border-[#aaa]" style={P(208, 713, 127, 40)}>
        <div className="absolute -top-[10px] left-[7px] px-[3px] h-[18px] leading-[18px] bg-[#e4e4e4] font-bold text-[14px] text-black whitespace-nowrap">Rotor Rotation</div>
      </div>
      <Lab x={216} y={738} t="180°" />
      <WarnRound className="absolute left-[73px] top-[568px]" />
      <Lab x={296} y={738} t="0°" />
      <WarnRound className="absolute left-[138px] top-[568px]" />

      <Dialog />
    </div>
  );
}

/* ------------------------- dialog ------------------------- */

function Tick() {
  return (
    <svg width="11" height="11" viewBox="0 0 11 11" className="absolute left-0 top-0">
      <path d="M1.5 5.5 L4.2 8.5 L9.5 2" fill="none" stroke="#444" strokeWidth="1" />
    </svg>
  );
}

function CheckRow({ t, on = false, off = false }: { t: string; on?: boolean; off?: boolean }) {
  return (
    <div className={`flex items-center gap-[6px] h-[13px] ${off ? "text-[#a8a8a8]" : "text-[#333]"}`}>
      <span className={`relative w-[13px] h-[13px] border bg-white ${off ? "border-[#ccc]" : "border-[#333]"}`}>{on && <Tick />}</span>
      {t}
    </div>
  );
}

function Btn({ t, className, blue = false }: { t: string; className: string; blue?: boolean }) {
  return (
    <div className={`flex items-center justify-center border text-[11px] ${blue ? "bg-[#e5f1fb] border-[#0078d7]" : "bg-[#e1e1e1] border-[#adadad]"} ${className}`}>{t}</div>
  );
}

function Dialog() {
  const tree = ["General", "Tunnel Furnace", "Roughing Mill", "Finishing Mill", "Laminar Cooling", "Down Coiler", "Coil Conveyor", "System"];
  const log = ["Opening... C:\\Project\\SDIB_TCM\\", "@SMS_FlyoutButton", "@SMS_FlyoutButton,494,5", "Opening... C:\\Project\\SDIB_TCM\\", "@SMS_FlyoutButton4"];
  return (
    <div className="absolute bg-[#f0f0f0] shadow-[0_0_10px_rgba(0,0,0,0.25)] text-[11px] text-[#333]" style={P(582, 235, 387, 354)}>
      <div className="relative h-[30px] bg-white text-[#8a8a8a] text-[12px] leading-[30px] pl-[8px]">
        WinCC Timer
        <div className="absolute right-[1px] top-[7px] w-[19px] h-[19px] bg-[#ececec] text-white text-center leading-[17px]">x</div>
      </div>
      <div className="pl-[12px]">
        <div className="flex mt-[12px] items-center h-[21px]">
          <Btn t="Time!" className="w-[75px] h-[20px] ml-[1px]" />
          <div className="ml-[8px] w-[195px] h-[19px] bg-white border border-[#7a7a7a] pl-[2px] leading-[17px] text-[12px]">SDI_CSPM_1-1033.sql</div>
          <div className="relative ml-[26px] w-[40px] h-[23px]">
            <div className="absolute left-[14px] top-[6px] w-[24px] h-[10px] rounded-full bg-white" />
            <div className="absolute left-0 top-0 w-[23px] h-[23px] rounded-full bg-[#808080]" />
          </div>
        </div>
        <div className="flex mt-[8px] h-[21px]">
          <div className="w-[25px] h-[19px] bg-white border border-[#7a7a7a] text-center leading-[17px] text-[12px]">4.5</div>
          <div className="ml-[7px] w-[19px] h-[19px] bg-white border border-[#7a7a7a] text-center leading-[17px] text-[12px]">10</div>
          <div className="ml-[7px] w-[19px] h-[19px] bg-white border border-[#7a7a7a] text-center leading-[17px] text-[12px]">27</div>
          <div className="ml-[7px] w-[195px] h-[19px] bg-white border border-[#7a7a7a] pl-[2px] leading-[17px]">Measurements</div>
          <Btn t="σ" className="ml-[8px] w-[72px] h-[21px] font-bold text-[14px] text-black" />
        </div>
        <div className="flex mt-[8px]">
          <div className="relative w-[279px] h-[144px] border border-[#828790] pt-[1px] pl-[9px]">
            <div className="absolute left-[13px] top-[10px] h-[112px] border-l border-dotted border-[#777]" />
            {tree.map((t) => (
              <div key={t} className="relative h-[16px] flex items-center">
                <span className="relative w-[9px] h-[9px] border border-[#888] bg-white text-[#1d4f91] text-[9px] leading-[6px] text-center">+</span>
                <span className="w-[5px] border-t border-dotted border-[#777]" />
                <span className="relative w-[13px] h-[13px] border border-[#333] bg-white">
                  <Tick />
                </span>
                <span className="ml-[2px] text-[#333] text-[10.5px]">{t}</span>
              </div>
            ))}
          </div>
          <div className="ml-[8px] flex flex-col pt-[1px]">
            <Btn t="Screenshots" className="w-[72px] h-[30px]" />
            <Btn t="Scrape" blue className="mt-[9px] w-[72px] h-[33px]" />
            <Btn t="Filelist" className="mt-[9px] w-[71px] h-[32px]" />
            <Btn t="Mainscreen" className="mt-[9px] ml-[1px] w-[72px] h-[20px]" />
          </div>
        </div>
        <div className="flex mt-[14px]">
          <div className="relative -ml-[1px] w-[185px] h-[81px] border border-[#828790] bg-[#f0f0f0] overflow-hidden">
            <div className="w-[166px] h-[62px] bg-white overflow-hidden pl-[2px] pt-[2px] leading-[13px] whitespace-nowrap">
              {log.map((l, i) => (
                <div key={i}>{l}</div>
              ))}
            </div>
            <div className="absolute right-[2px] top-[18px] w-[15px] h-[17px] bg-[#cdcdcd]" />
            <div className="absolute right-[5px] top-[8px] text-[#555] text-[9px] leading-[9px]">⌃</div>
            <div className="absolute right-[5px] top-[50px] text-[#555] text-[9px] leading-[9px]">⌄</div>
            <div className="absolute left-[18px] bottom-[2px] w-[33px] h-[15px] bg-[#cdcdcd]" />
            <div className="absolute left-[6px] bottom-[3px] text-[#555] text-[11px] leading-[11px]">‹</div>
            <div className="absolute left-[155px] bottom-[3px] text-[#555] text-[11px] leading-[11px]">›</div>
          </div>
          <div className="ml-[16px] w-[94px] flex flex-col gap-[10px] pt-[2px] text-[11px]">
            <CheckRow t="Popups" />
            <CheckRow t="Dropdowns" />
            <CheckRow t="Embeddeds" on />
          </div>
          <div className="flex flex-col gap-[9px] pt-[2px]">
            <CheckRow t="Snap" />
            <CheckRow t="Screen" />
            <CheckRow t="Expand" />
            <CheckRow t="Select" off />
          </div>
        </div>
      </div>
    </div>
  );
}

/* ------------------------- conditions ------------------------- */

function CondBox({ title, items }: { title: string; items: string[] }) {
  return (
    <div className="relative h-[100px] border border-[#a8a8a8] px-[9px] pt-[19px] flex flex-col gap-[4px]">
      <div className="absolute -top-[10px] left-[6px] px-[3px] h-[18px] leading-[18px] bg-[#d8d8d8] font-bold text-[14px] text-[#111]">{title}</div>
      {items.map((t) => (
        <div key={t} className="h-[28px] border border-white flex items-center justify-center pl-[4px] text-[14px] text-[#333]">
          {t}
        </div>
      ))}
    </div>
  );
}

function Conditions() {
  const RP = ["Rolling Condition", "Positioning Condition"];
  const data: [string, string[]][] = [
    ["Tension Reel 1", RP],
    ["Stand 1", RP],
    ["Stand 2", RP],
    ["Stand 4", RP],
    ["Pay-Off Reel", RP],
    ["Tension Reel 2", RP],
    ["Deflector Roll", ["Rolling Condition"]],
    ["Stand 3", RP],
    ["Stand 5", RP],
    ["Bridle Rolls", ["Top Roll - Rolling Condition", "Bottom Roll - Rolling Condition"]],
  ];
  const tabs: [string, string][] = [
    ["Graphic", "h-[64px] border border-[#555] border-r-0 rounded-tl-[3px] text-[#333]"],
    ["Numeric", "h-[64px] border border-[#555] border-r-0 text-[#333]"],
    ["Cond.", "h-[64px] font-bold text-[#111]"],
    ["Status", "h-[62px] border border-[#555] border-r-0 border-b-0 text-[#333]"],
  ];
  return (
    <div className="flex-1 flex border-t-2 border-[#666] bg-[#d8d8d8]">
      <div className="w-[1716px] pl-[21px] pt-[17px]">
        <div className="w-[1666px] grid grid-cols-5 gap-x-[19px] gap-y-[19px]">
          {data.map(([t, i]) => (
            <CondBox key={t} title={t} items={i} />
          ))}
        </div>
      </div>
      <div className="w-[30px] flex flex-col">
        {tabs.map(([t, c]) => (
          <div key={t} className={`flex items-center justify-center pr-[3px] [writing-mode:vertical-rl] text-[14px] ${c}`}>
            {t}
          </div>
        ))}
      </div>
    </div>
  );
}

/* ------------------------- bottom ------------------------- */

function StatusBar() {
  return (
    <div className="h-[30px] shrink-0 flex border-t-2 border-[#222] bg-[#d8d8d8]">
      <div className="relative ml-[2px] w-[58px] flex items-center justify-center bg-linear-to-b from-[#eeeeee] to-[#cfcfcf] border-r border-[#777]">
        <svg width="16" height="22" viewBox="0 0 16 22">
          <path d="M11 0 L2 12 H7 L4 22 L14 9 H9 Z" fill="#111" />
        </svg>
        <span className="absolute right-[2px] top-[1px] w-0 h-0 border-l-[5px] border-l-transparent border-t-[5px] border-t-black" />
      </div>
      <div className="flex-1 ml-[1px] mr-[2px] my-[1px] bg-white border border-[#8c8c78] text-center text-[19px] leading-[24px] text-black">No connection to data server!</div>
    </div>
  );
}

function BottomNav() {
  const tabs: [string, string][] = [
    ["Tr. Entry", "w-[127px]"],
    ["TCM", "w-[126px]"],
    ["Tr. Exit", "w-[126px]"],
  ];
  const items: string[][] = [
    ["Overview", "Track. Corection"],
    ["Overview", "POR"],
    ["Overview", "Tension Reel"],
    ["Setup Data"],
    ["Flatness", "Control C1"],
    ["Flatness", "Control C5"],
    ["Cooling and", "Lubr. C1 - C4"],
    ["Cooling and", "Lubr. C5"],
    ["Stand C1", "Roll Change"],
  ];
  const icon = "flex items-center justify-center border-l border-[#1c1c1c]";
  return (
    <div className="h-[40px] shrink-0 flex bg-linear-to-b from-[#6a6a6a] to-[#303030] text-white border-t border-[#111]">
      {tabs.map(([t, w]) => (
        <div
          key={t}
          className={`${w} flex items-center justify-center pt-[2px] text-[18px] border-r border-[#1c1c1c] ${t === "TCM" ? "bg-linear-to-b from-[#5c5c5c] to-[#4c4c4c] border-b-2 border-b-[#888]" : ""}`}
        >
          {t}
        </div>
      ))}
      <div className="w-[1px]" />
      {items.map((l, i) => (
        <div key={i} className="w-[128px] flex flex-col items-center justify-center border-x border-[#1c1c1c] text-[16px] leading-[18px] whitespace-nowrap">
          {l.map((s) => (
            <span key={s}>{s}</span>
          ))}
        </div>
      ))}
      <div className="w-[151px]" />
      <div className={`${icon} w-[59px]`}>
        <svg width="32" height="28" viewBox="0 0 32 28">
          <rect x="1" y="1" width="25" height="18" fill="#fff" />
          <g fill="#555">
            <rect x="3" y="3" width="10" height="6" />
            <rect x="15" y="3" width="9" height="6" />
            <rect x="3" y="11" width="10" height="6" />
            <rect x="15" y="11" width="9" height="6" />
          </g>
          <path d="M11 19 H16 V23 H21 V25 H6 V23 H11 Z" fill="#fff" />
          <path d="M28 11 L30.5 14 H25.5 Z" fill="#fff" />
        </svg>
      </div>
      <div className={`${icon} w-[60px]`}>
        <svg width="34" height="30" viewBox="0 0 34 30">
          <rect x="1" y="1" width="25" height="18" fill="#c8c8c8" stroke="#fff" strokeWidth="2" />
          <path d="M10 19 H15 V23 H21 V25 H6 V23 H10 Z" fill="#fff" />
          <circle cx="22" cy="17" r="3.5" fill="none" stroke="#fff" strokeWidth="1.5" />
          <path d="M22 20 V29 M22 25 H25 M22 28 H25" stroke="#fff" strokeWidth="1.2" />
          <path d="M30 11 L32.5 14 H27.5 Z" fill="#fff" />
        </svg>
      </div>
      <div className={`${icon} w-[58px]`}>
        <svg width="26" height="22" viewBox="0 0 26 22">
          <path d="M1 5 H7 L9 1 H17 L19 5 H25 V21 H1 Z" fill="#e8e8e8" />
          <circle cx="13" cy="13" r="6" fill="#444" />
          <circle cx="13" cy="13" r="3.5" fill="#e8e8e8" />
        </svg>
      </div>
      <div className={`${icon} w-[59px]`}>
        <svg width="28" height="28" viewBox="0 0 28 28">
          <rect x="2" y="5" width="20" height="21" fill="none" stroke="#fff" strokeWidth="2.6" />
          <path d="M7 14 L12 20 L24 2" fill="none" stroke="#fff" strokeWidth="3.4" />
        </svg>
      </div>
    </div>
  );
}

export default function App() {
  return (
    <div className="w-[1920px] h-[1080px] overflow-hidden flex flex-col font-['Liberation_Sans',Arial,sans-serif] text-[14px] bg-[#e4e4e4]">
      <TopBar />
      <Header />
      <NavBar />
      <div className="h-[850px] shrink-0 flex">
        <Sidebar />
        <div className="flex-1 flex flex-col min-w-0">
          <Canvas />
          <Conditions />
        </div>
      </div>
      <StatusBar />
      <BottomNav />
    </div>
  );
}
